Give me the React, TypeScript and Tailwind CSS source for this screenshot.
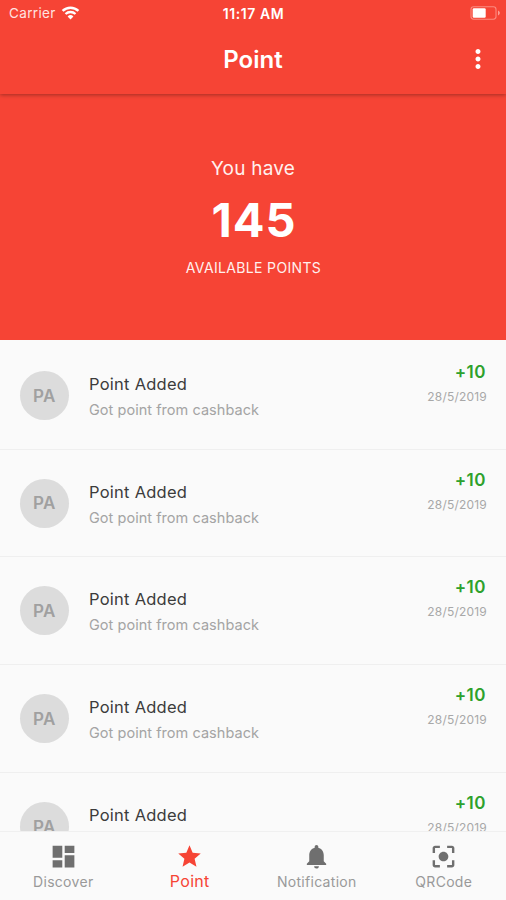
import React from "react";
import {
  MdCenterFocusStrong,
  MdDashboard,
  MdMoreVert,
  MdNotifications,
  MdStar,
} from "react-icons/md";

const entries = [1, 2, 3, 4, 5].map((id) => ({
  id,
  initials: "PA",
  title: "Point Added",
  detail: "Got point from cashback",
  amount: "+10",
  date: "28/5/2019",
}));

function Wifi() {
  return (
    <svg className="ml-[5px] h-[14px] w-[19px]" viewBox="0 0 18 14" fill="none">
      <path d="M1.1 4.9a11.3 11.3 0 0 1 15.8 0" stroke="#fff" strokeWidth="2.5" />
      <path d="M4 8a7.2 7.2 0 0 1 10 0" stroke="#fff" strokeWidth="2.3" />
      <path d="M9 13.4 6.1 10.4a4.2 4.2 0 0 1 5.8 0z" fill="#fff" />
    </svg>
  );
}

function Battery() {
  return (
    <svg className="h-[14px] w-[31px]" viewBox="0 0 31 14" fill="none">
      <rect x="1" y=".8" width="25" height="12.4" rx="2.6" stroke="#fb8a80" strokeWidth="1.1" />
      <path d="M28 4.6v4.8c1-.4 1.8-1.3 1.8-2.4S29 5 28 4.6z" fill="#fd9d94" />
      <rect x="2.7" y="2.3" width="13" height="9.4" rx="1.2" fill="#fff" />
    </svg>
  );
}

function Header() {
  return (
    <header className="relative z-10 h-[94px] bg-[#f64435] text-white shadow-[0_1px_4px_rgba(0,0,0,0.34)]">
      <div className="grid h-[26px] grid-cols-3 items-center">
        <div className="flex items-center pl-[9px] text-[13.5px] tracking-[0.35px] text-[#ffe3e0]">
          Carrier
          <Wifi />
        </div>
        <div className="pl-[1px] text-center text-[14px] font-semibold tracking-[0.6px]">11:17 AM</div>
        <div className="flex justify-end pr-[5px]">
          <Battery />
        </div>
      </div>
      <div className="grid h-[67px] grid-cols-3 items-center">
        <h1 className="col-start-2 text-center text-[24px] font-semibold">Point</h1>
        <button className="mr-[13px] mb-[1px] justify-self-end" aria-label="More">
          <MdMoreVert size={30} />
        </button>
      </div>
    </header>
  );
}

function Balance() {
  return (
    <section className="flex h-[246px] flex-col items-center bg-[#f64435] pt-[61px] text-white">
      <p className="text-[19px] leading-[28px] tracking-[0.2px] text-[#fff0ee]">You have</p>
      <p className="mt-[7px] pl-[2px] text-[47px] leading-[60px] font-bold tracking-[1px]">145</p>
      <p className="mt-[8px] pl-[1px] text-[14px] leading-[20px] tracking-[0.35px] text-[#fff0ee]">AVAILABLE POINTS</p>
    </section>
  );
}

function Row({ entry }: { entry: (typeof entries)[number] }) {
  return (
    <li className="flex h-[107.7px] shrink-0 border-b border-[#efefef] pr-[19px] pl-[20px]">
      <div className="mt-[29px] flex size-[49px] items-center justify-center rounded-full bg-[#dcdcdc] pt-[2px] text-[17px] font-semibold tracking-[0.4px] text-[#a0a0a0]">
        {entry.initials}
      </div>
      <div className="ml-[20px] flex-1 pt-[30px]">
        <p className="text-[16.5px] leading-[24px] tracking-[0.25px] text-[#3c3c3c]">{entry.title}</p>
        <p className="mt-[2px] text-[14.5px] leading-[24px] tracking-[0.04px] text-[#a4a4a4]">{entry.detail}</p>
      </div>
      <div className="pt-[19px] text-right">
        <p className="pr-[1px] text-[17px] leading-[22px] font-semibold tracking-[0.5px] text-[#2da12d]">{entry.amount}</p>
        <p className="mt-[5px] text-[12px] leading-[18px] tracking-[0.2px] text-[#a8a8a8]">{entry.date}</p>
      </div>
    </li>
  );
}

function TabBar() {
  return (
    <nav className="grid h-[69px] shrink-0 grid-cols-4 border-t border-[#f0f0f0] bg-[#fafafa] text-[14px] leading-[20px] tracking-[0.3px] text-[#999]">
      <div className="flex flex-col items-center pt-[9.5px]">
        <MdDashboard size={29} color="#6f6f6f" />
        <span className="mt-[1.5px]">Discover</span>
      </div>
      <div className="flex flex-col items-center pt-[11px] text-[#f64435]">
        <MdStar size={27} />
        <span className="mt-[1px] text-[16px]">Point</span>
      </div>
      <div className="flex flex-col items-center pt-[9.5px] pl-[1px]">
        <MdNotifications size={29} color="#6f6f6f" />
        <span className="mt-[1.5px]">Notification</span>
      </div>
      <div className="flex flex-col items-center pt-[9.5px] pl-[2px]">
        <MdCenterFocusStrong size={29} color="#6f6f6f" />
        <span className="mt-[1.5px]">QRCode</span>
      </div>
    </nav>
  );
}

export default function App() {
  return (
    <div className="flex h-[900px] w-[506px] flex-col overflow-hidden bg-[#fafafa] font-['Inter',sans-serif]">
      <Header />
      <Balance />
      <ul className="flex min-h-0 flex-1 flex-col overflow-hidden pt-[2px]">
        {entries.map((entry) => (
          <Row key={entry.id} entry={entry} />
        ))}
      </ul>
      <TabBar />
    </div>
  );
}
